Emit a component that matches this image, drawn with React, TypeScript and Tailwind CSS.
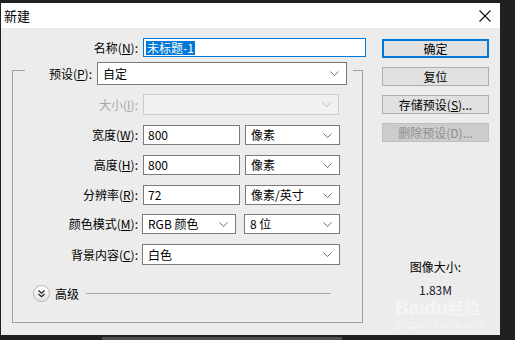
import React from "react";

const Chevron = ({ color = "#6d6d6d" }: { color?: string }) => (
  <svg width="9" height="5" viewBox="0 0 9 5" className="shrink-0">
    <polyline points="0.5,0.5 4.5,4.5 8.5,0.5" fill="none" stroke={color} strokeWidth="1" />
  </svg>
);

const Select = ({ w, h = 20, text, disabled = false }: { w: string; h?: number; text?: string; disabled?: boolean }) => (
  <div
    className={`${w} ${h === 23 ? "h-[23px]" : h === 21 ? "h-[21px]" : "h-[20px]"} flex items-center justify-between pl-[5px] pr-[7px] border ${
      disabled ? "border-[#cccccc] bg-[#f0f0f0]" : "border-[#7a7a7a] bg-white"
    }`}
  >
    <span className="leading-[14px] whitespace-nowrap">{text}</span>
    <Chevron color={disabled ? "#bdbdbd" : "#6d6d6d"} />
  </div>
);

const Input = ({ w, text }: { w: string; text: string }) => (
  <div className={`${w} h-[20px] flex items-center pl-[4px] border border-[#7a7a7a] bg-white`}>
    <span className="leading-[14px]">{text}</span>
  </div>
);

const Label = ({ children, w = "w-[125px]", gray = false }: { children: React.ReactNode; w?: string; gray?: boolean }) => (
  <div className={`${w} shrink-0 text-right leading-[14px] whitespace-nowrap ${gray ? "text-[#a8a8a8]" : ""}`}>{children}</div>
);

export default function App() {
  return (
    <div className="relative w-[515px] h-[340px] overflow-hidden bg-[#202020] pt-[3px] pl-[1px] font-['Noto_Sans_CJK_SC',sans-serif] text-[12px] text-black">
      <div className="w-[499px] h-[332px] flex flex-col bg-[#ececec]">
        <div className="h-[25px] shrink-0 bg-white flex items-center justify-between pl-[3px] pr-[9px]">
          <span className="text-[13px] leading-[16px]">新建</span>
          <svg width="12" height="12" viewBox="0 0 12 12">
            <line x1="0.5" y1="0.5" x2="11.5" y2="11.5" stroke="#111" strokeWidth="1.1" />
            <line x1="11.5" y1="0.5" x2="0.5" y2="11.5" stroke="#111" strokeWidth="1.1" />
          </svg>
        </div>
        <div className="flex flex-1">
          {/* left */}
          <div className="w-[370px] shrink-0 flex flex-col">
            <div className="mt-[10px] flex items-center">
              <Label w="w-[137px]">
                名称(<span className="underline">N</span>):
              </Label>
              <div className="ml-[5px] w-[223px] h-[19px] flex items-center pl-[2px] border border-[#0078d7] bg-white">
                <span className="bg-[#0078d7] text-white leading-[14px] px-[1px]">未标题-1</span>
              </div>
            </div>
            <div className="ml-[11px] mt-[13px] w-[351px] h-[253px] border border-[#a0a0a0] flex flex-col">
              <div className="mt-[-9px] ml-[12px] w-[328px] h-[23px] bg-[#ececec] flex items-center">
                <Label w="w-[67px]">
                  预设(<span className="underline">P</span>):
                </Label>
                <div className="ml-[5px]">
                  <Select w="w-[250px]" h={23} text="自定" />
                </div>
              </div>
              <div className="mt-[9px] flex items-center">
                <Label gray>
                  大小(<span className="underline">I</span>):
                </Label>
                <div className="ml-[5px]">
                  <Select w="w-[196px]" h={21} disabled />
                </div>
              </div>
              <div className="mt-[10px] flex items-center">
                <Label>
                  宽度(<span className="underline">W</span>):
                </Label>
                <div className="ml-[5px] flex gap-[5px]">
                  <Input w="w-[97px]" text="800" />
                  <Select w="w-[95px]" text="像素" />
                </div>
              </div>
              <div className="mt-[10px] flex items-center">
                <Label>
                  高度(<span className="underline">H</span>):
                </Label>
                <div className="ml-[5px] flex gap-[5px]">
                  <Input w="w-[97px]" text="800" />
                  <Select w="w-[95px]" text="像素" />
                </div>
              </div>
              <div className="mt-[10px] flex items-center">
                <Label>
                  分辨率(<span className="underline">R</span>):
                </Label>
                <div className="ml-[5px] flex gap-[5px]">
                  <Input w="w-[97px]" text="72" />
                  <Select w="w-[95px]" text="像素/英寸" />
                </div>
              </div>
              <div className="mt-[9px] flex items-center">
                <Label>
                  颜色模式(<span className="underline">M</span>):
                </Label>
                <div className="ml-[4px] flex gap-[8px]">
                  <Select w="w-[94px]" text="RGB 颜色" />
                  <Select w="w-[96px]" text="8 位" />
                </div>
              </div>
              <div className="mt-[10px] flex items-center">
                <Label>
                  背景内容(<span className="underline">C</span>):
                </Label>
                <div className="ml-[4px]">
                  <Select w="w-[198px]" h={21} text="白色" />
                </div>
              </div>
              <div className="mt-[20px] ml-[20px] mr-[31px] flex items-center">
                <svg width="17" height="17" viewBox="0 0 17 17" className="shrink-0">
                  <defs>
                    <linearGradient id="g" x1="0" y1="0" x2="0" y2="1">
                      <stop offset="0" stopColor="#ffffff" />
                      <stop offset="1" stopColor="#e4e4e4" />
                    </linearGradient>
                  </defs>
                  <circle cx="8.5" cy="8.5" r="8" fill="url(#g)" stroke="#b4b4b4" strokeWidth="1" />
                  <polyline points="5.5,5.5 8.5,8.3 11.5,5.5" fill="none" stroke="#222" strokeWidth="1.2" />
                  <polyline points="5.5,9 8.5,11.8 11.5,9" fill="none" stroke="#222" strokeWidth="1.2" />
                </svg>
                <span className="ml-[5px] text-[12px] leading-[14px]">高级</span>
                <div className="ml-[7px] flex-1 h-px bg-[#a8a8a8]" />
              </div>
            </div>
          </div>
          {/* right */}
          <div className="ml-[11px] pt-[11px] w-[107px] flex flex-col">
            <div className="h-[19px] flex items-center justify-center border-2 border-[#0078d7] bg-[#e1e1e1] leading-[14px]">确定</div>
            <div className="mt-[9px] h-[19px] flex items-center justify-center border border-[#adadad] bg-[#e1e1e1] leading-[14px]">复位</div>
            <div className="mt-[9px] h-[19px] flex items-center justify-center border border-[#adadad] bg-[#e1e1e1] leading-[14px]">
              存储预设(<span className="underline">S</span>)...
            </div>
            <div className="mt-[9px] h-[19px] flex items-center justify-center border border-[#bfbfbf] bg-[#cccccc] text-[#8e8e8e] leading-[14px]">
              删除预设(D)...
            </div>
            <div className="mt-[118px] text-center leading-[14px]">图像大小:</div>
            <div className="mt-[9px] text-center leading-[14px] text-[#1a1a2a]">1.83M</div>
          </div>
        </div>
      </div>
      <div className="absolute left-[102px] top-[337px] w-[240px] h-[3px] bg-[#4e4e4e]" />
      <div className="absolute left-[395px] top-[298px] text-[19px] leading-[18px] font-bold text-white/50 font-['Liberation_Sans',sans-serif]">
        Baidu<span className="text-[16px] font-['Noto_Sans_CJK_SC',sans-serif]">经验</span>
      </div>
      <div className="absolute left-[396px] top-[318px] text-[11px] leading-[12px] text-white/50 font-['Liberation_Sans',sans-serif]">
        jingyan.baidu.com
      </div>
    </div>
  );
}
